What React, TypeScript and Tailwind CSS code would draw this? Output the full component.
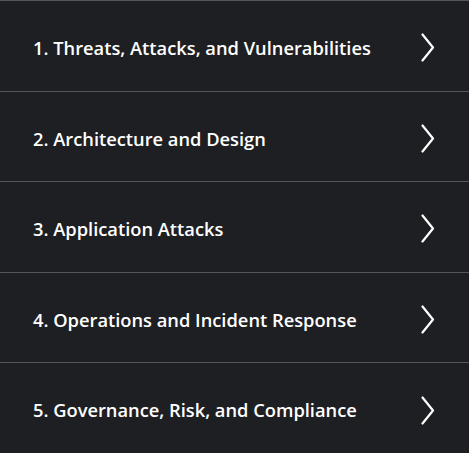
import React from "react";

const topics = [
  "1. Threats, Attacks, and Vulnerabilities",
  "2. Architecture and Design",
  "3. Application Attacks",
  "4. Operations and Incident Response",
  "5. Governance, Risk, and Compliance",
];

const Chevron = () => (
  <svg width="14" height="29" viewBox="0 0 14 29" fill="none" className="shrink-0">
    <path d="M1.5 1.5 L12 14.5 L1.5 27.5" stroke="white" strokeWidth="2.2" strokeLinecap="round" strokeLinejoin="round" />
  </svg>
);

const App = () => {
  return (
    <div className="w-[469px] h-[453px] overflow-hidden bg-[#1d1f23] font-['Open_Sans',sans-serif]">
      {topics.map((title) => (
        <div
          key={title}
          className="h-[90.6px] border-t border-[#55575b] flex items-center justify-between pl-[33px] pr-[34px] pt-[4px] cursor-pointer"
        >
          <span className="text-white text-[18.3px] font-semibold">{title}</span>
          <Chevron />
        </div>
      ))}
    </div>
  );
};

export default App;
